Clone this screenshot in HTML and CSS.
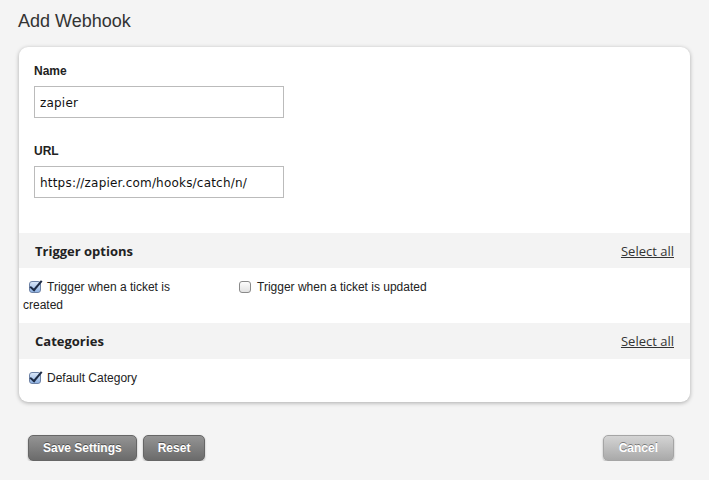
FILE: index.html
```html
<!DOCTYPE html>
<html lang="en">
<head>
    <meta charset="UTF-8">
    <title>Add Webhook</title>
    <link rel="stylesheet" href="styles.css">
</head>
<body>

<div class="page">
    <h2>Add Webhook</h2>

    <div class="card">
        <div class="fields">
            <label class="field-label">Name</label>
            <input type="text" class="field-input" value="zapier">

            <label class="field-label url">URL</label>
            <input type="text" class="field-input" value="https://zapier.com/hooks/catch/n/">
        </div>

        <div class="band">
            <span class="band-title">Trigger options</span>
            <a href="#" class="select-all">Select all</a>
        </div>
        <div class="options">
            <div class="option"><span class="check checked"></span>Trigger when a ticket is created</div>
            <div class="option wide"><span class="check"></span>Trigger when a ticket is updated</div>
        </div>

        <div class="band tall">
            <span class="band-title">Categories</span>
            <a href="#" class="select-all">Select all</a>
        </div>
        <div class="options last">
            <div class="option"><span class="check checked"></span>Default Category</div>
        </div>
    </div>

    <div class="actions">
        <button class="btn">Save Settings</button>
        <button class="btn">Reset</button>
        <button class="btn light">Cancel</button>
    </div>
</div>

</body>
</html>
```

FILE: styles.css
```css
* {
    box-sizing: border-box;
    margin: 0;
    padding: 0;
}

body {
    background-color: #f4f4f4;
    font-family: 'Liberation Sans', Arial, sans-serif;
    color: #333;
}

.page {
    padding: 10px 19px 0 19px;
}

h2 {
    font-size: 18px;
    font-weight: normal;
    color: #333;
    margin-left: -1px;
    line-height: 22px;
    margin-bottom: 15px;
}

.card {
    width: 671px;
    background-color: #fff;
    border-radius: 9px;
    box-shadow: 0 1px 4px rgba(0, 0, 0, 0.3);
    overflow: hidden;
}

.fields {
    padding: 16px 15px 35px 15px;
}

.field-label {
    display: block;
    font-size: 12px;
    font-weight: bold;
    color: #222;
    line-height: 16px;
    margin-bottom: 7px;
}

.field-label.url {
    margin-top: 25px;
}

.field-input {
    display: block;
    width: 250px;
    height: 32px;
    border: 1px solid #bbb;
    padding: 2px 5px 0 5px;
    font-family: 'DejaVu Sans', sans-serif;
    font-size: 12px;
    letter-spacing: 0.2px;
    color: #111;
    background: #fff;
}

.band {
    display: flex;
    justify-content: space-between;
    align-items: center;
    height: 35px;
    padding: 0 16px;
    background-color: #f3f3f3;
    font-family: 'Open Sans', sans-serif;
}

.band.tall {
    height: 36px;
}

.band-title {
    font-size: 13px;
    font-weight: bold;
    color: #222;
}

.select-all {
    font-size: 13px;
    color: #333;
    text-decoration: underline;
}

.options {
    display: flex;
    align-items: flex-start;
    padding: 10px 4px 9px 4px;
}

.options.last {
    padding-bottom: 15px;
}

.option {
    width: 180px;
    margin-right: 30px;
    font-size: 12px;
    line-height: 18px;
    color: #222;
}

.option.wide {
    width: auto;
}

.check {
    display: inline-block;
    position: relative;
    width: 12px;
    height: 12px;
    margin: 0 6px 0 6px;
    vertical-align: -2px;
    border: 1px solid #8a8a8a;
    border-radius: 3px;
    background: linear-gradient(#fdfdfd, #e2e2e2);
}

.check.checked {
    border-color: #6d82a6;
    background: linear-gradient(#d8e6f8, #8fb2e2);
}

.check.checked::after {
    content: '';
    position: absolute;
    left: 3px;
    top: -4px;
    width: 4px;
    height: 11px;
    border-right: 2px solid #1d2b45;
    border-bottom: 2px solid #1d2b45;
    transform: rotate(40deg);
}

.actions {
    display: flex;
    gap: 6px;
    margin-top: 33px;
    padding-left: 9px;
    width: 671px;
}

.btn {
    height: 26px;
    padding: 0 14px;
    border: 1px solid #666;
    border-radius: 5px;
    background: linear-gradient(#949494, #6b6b6b);
    color: #fff;
    font-family: 'Liberation Sans', Arial, sans-serif;
    font-size: 12px;
    font-weight: bold;
    text-shadow: 0 -1px 0 rgba(0, 0, 0, 0.4);
    box-shadow: 0 1px 2px rgba(0, 0, 0, 0.3);
}

.btn.light {
    margin-left: auto;
    margin-right: 16px;
    padding: 0 15px;
    border-color: #a5a5a5;
    background: linear-gradient(#d4d4d4, #a9a9a9);
}
```
